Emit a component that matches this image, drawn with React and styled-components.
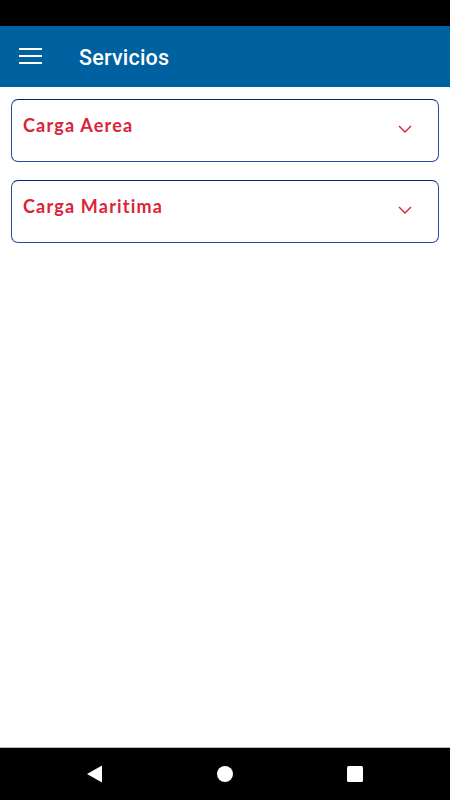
import React from "react"
import styled, { createGlobalStyle } from "styled-components"

const GlobalStyle = createGlobalStyle`
  html, body {
    margin: 0;
    padding: 0;
    background: #fff;
  }
  #root {
    height: 800px;
  }
`

const Screen = styled.div`
  width: 450px;
  height: 800px;
  display: flex;
  flex-direction: column;
  background: #fff;
  font-family: Roboto, "Noto Sans", sans-serif;
`

const StatusBar = styled.div`
  height: 26px;
  background: #000;
`

const Toolbar = styled.div`
  height: 61px;
  background: #0061a1;
  display: flex;
  align-items: center;
  padding: 0 0 0 19px;
  gap: 37px;
`

const MenuButton = styled.div`
  width: 23px;
  height: 16px;
  display: flex;
  flex-direction: column;
  justify-content: space-between;
  padding-bottom: 2px;

  span {
    display: block;
    height: 2px;
    background: #fff;
  }
`

const Title = styled.h1`
  margin: 2px 0 0 0;
  color: #fff;
  font-size: 21.5px;
  font-weight: 500;
  letter-spacing: 0.2px;
`

const Content = styled.div`
  flex: 1;
  padding: 12px 11px;
  display: flex;
  flex-direction: column;
  gap: 18px;
`

const Card = styled.div`
  height: 61px;
  border: 1px solid #2a4aa0;
  border-top-color: #0c208c;
  border-radius: 7px;
  display: flex;
  align-items: flex-start;
  justify-content: space-between;
  padding: 0 26px 0 11px;
`

const CardTitle = styled.div`
  margin-top: 14px;
  color: #dc2339;
  font-family: Lato, "Open Sans", sans-serif;
  font-weight: 700;
  font-size: 18px;
  letter-spacing: 1.2px;
`

const Chevron = styled.svg`
  margin-top: 25px;
  width: 14px;
  height: 8px;
`

const NavBar = styled.div`
  height: 52px;
  background: #000;
  border-top: 1px solid #bbb;
  display: flex;
  align-items: center;
  justify-content: center;
  gap: 112px;
`

const NavIcon = styled.svg`
  width: 18px;
  height: 18px;
`

const services = ["Carga Aerea", "Carga Maritima"]

const App = () => {
  return (
    <>
      <GlobalStyle />
      <Screen>
        <StatusBar />
        <Toolbar>
          <MenuButton>
            <span />
            <span />
            <span />
          </MenuButton>
          <Title>Servicios</Title>
        </Toolbar>
        <Content>
          {services.map((s) => (
            <Card key={s}>
              <CardTitle>{s}</CardTitle>
              <Chevron viewBox="0 0 14 8">
                <path d="M1 1 L7 7 L13 1" fill="none" stroke="#dc2339" strokeWidth="1.4" />
              </Chevron>
            </Card>
          ))}
        </Content>
        <NavBar>
          <NavIcon viewBox="0 0 18 18">
            <path d="M16 0.5 L16 17.5 L1 9 Z" fill="#fff" />
          </NavIcon>
          <NavIcon viewBox="0 0 18 18">
            <circle cx="9" cy="9" r="8" fill="#fff" />
          </NavIcon>
          <NavIcon viewBox="0 0 18 18">
            <rect x="1" y="1" width="16" height="16" rx="1.5" fill="#fff" />
          </NavIcon>
        </NavBar>
      </Screen>
    </>
  )
}

export default App
